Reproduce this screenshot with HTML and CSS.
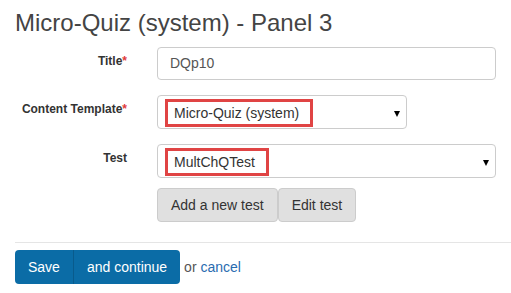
FILE: index.html
```html
<!DOCTYPE html>
<html lang="en">
<head>
    <meta charset="UTF-8">
    <title>Micro-Quiz (system) - Panel 3</title>
    <link rel="stylesheet" href="styles.css">
</head>
<body>

    <div class="page">
        <h1 class="page-title">Micro-Quiz (system) - Panel 3</h1>

        <form class="panel-form">
            <div class="form-row">
                <label class="form-label">Title<span class="req">*</span></label>
                <div class="form-field">
                    <div class="text-input">DQp10</div>
                </div>
            </div>

            <div class="form-row">
                <label class="form-label">Content Template<span class="req">*</span></label>
                <div class="form-field">
                    <div class="select-box select-short">
                        <span class="highlight">Micro-Quiz (system)</span>
                        <span class="caret"></span>
                    </div>
                </div>
            </div>

            <div class="form-row">
                <label class="form-label">Test</label>
                <div class="form-field">
                    <div class="select-box">
                        <span class="highlight">MultChQTest</span>
                        <span class="caret"></span>
                    </div>
                </div>
            </div>

            <div class="form-row row-buttons">
                <div class="form-label"></div>
                <div class="form-field btn-pair">
                    <button type="button" class="btn">Add a new test</button>
                    <button type="button" class="btn">Edit test</button>
                </div>
            </div>
        </form>

        <hr class="divider">

        <div class="actions">
            <div class="save-group">
                <button type="button" class="btn-save">Save</button>
                <button type="button" class="btn-save">and continue</button>
            </div>
            <span class="or-text">or <a href="#">cancel</a></span>
        </div>
    </div>

</body>
</html>
```

FILE: styles.css
```css
body {
    margin: 0;
    background-color: #fff;
    color: #333;
    font-family: "Liberation Sans", Arial, sans-serif;
    font-size: 14px;
}

.page {
    padding-left: 15px;
}

.page-title {
    margin: 10px 0 11px 0;
    font-size: 24px;
    line-height: 26px;
    font-weight: normal;
    color: #444;
}

.panel-form {
    padding-right: 15px;
}

.form-row {
    display: flex;
    margin-bottom: 15px;
}

.row-buttons {
    margin-top: -5px;
    margin-bottom: 0;
}

.form-label {
    width: 112px;
    flex-shrink: 0;
    padding: 6px 30px 0 0;
    text-align: right;
    font-size: 12px;
    line-height: 16px;
    font-weight: bold;
    color: #333;
}

.req {
    color: #e03a3a;
}

.form-field {
    flex: 1;
}

.text-input {
    height: 31px;
    line-height: 31px;
    padding: 0 12px;
    border: 1px solid #ccc;
    border-radius: 4px;
    color: #555;
}

.select-box {
    display: flex;
    align-items: flex-start;
    height: 29px;
    padding: 3px 0 0 7px;
    border: 1px solid #ccc;
    border-radius: 4px;
    color: #333;
}

.select-short {
    width: 241px;
}

.highlight {
    height: 22px;
    line-height: 22px;
    padding: 0 11px 0 6px;
    border: 3px solid #e04444;
}

.caret {
    width: 0;
    height: 0;
    margin: 12px 6px 0 auto;
    border-left: 3.5px solid transparent;
    border-right: 3.5px solid transparent;
    border-top: 6px solid #000;
}

.btn-pair {
    display: flex;
}

.btn {
    height: 34px;
    padding: 0 13px;
    margin: 0;
    font-family: inherit;
    font-size: 14px;
    color: #333;
    background-color: #e0e0e0;
    border: 1px solid #ccc;
    border-radius: 4px;
}

.divider {
    margin: 20px 0 7px 0;
    border: 0;
    border-top: 1px solid #e5e5e5;
}

.actions {
    display: flex;
    align-items: center;
}

.save-group {
    display: flex;
    background-color: #0b6ca6;
    border-radius: 4px;
}

.btn-save {
    height: 34px;
    padding: 0 13px;
    margin: 0;
    font-family: inherit;
    font-size: 14px;
    color: #fff;
    background: transparent;
    border: 0;
}

.btn-save + .btn-save {
    border-left: 1px solid #095b8c;
}

.or-text {
    margin-left: 4px;
    color: #555;
}

.or-text a {
    color: #2a6cb0;
    text-decoration: none;
}
```
